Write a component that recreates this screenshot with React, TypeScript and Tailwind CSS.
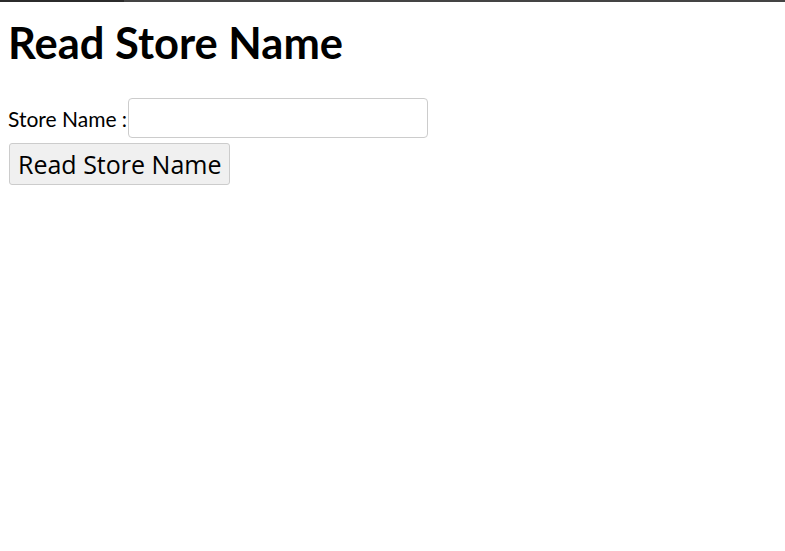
export default function App() {
  return (
    <div className="min-h-screen bg-white text-black">
      <div className="flex h-[2px]">
        <div className="w-[124px] bg-[#2b2b2b]" />
        <div className="flex-1 bg-[#444]" />
      </div>
      <main className="px-2 font-['Lato',sans-serif]">
        <h1 className="mt-[16px] text-[43.5px] font-bold leading-[48px]">Read Store Name</h1>
        <div className="mt-[32px] flex items-center">
          <label className="text-[21px] leading-none">Store Name :</label>
          <input className="ml-[1px] h-[40px] w-[300px] rounded-[4px] border border-[#ccc] bg-white px-2 outline-none" />
        </div>
        <button className="ml-px mt-[5px] h-[42px] rounded-[3px] border border-[#ccc] bg-[#f0f0f0] px-[8px] font-['Open_Sans',sans-serif] text-[25px] leading-none">
          Read Store Name
        </button>
      </main>
    </div>
  );
}
